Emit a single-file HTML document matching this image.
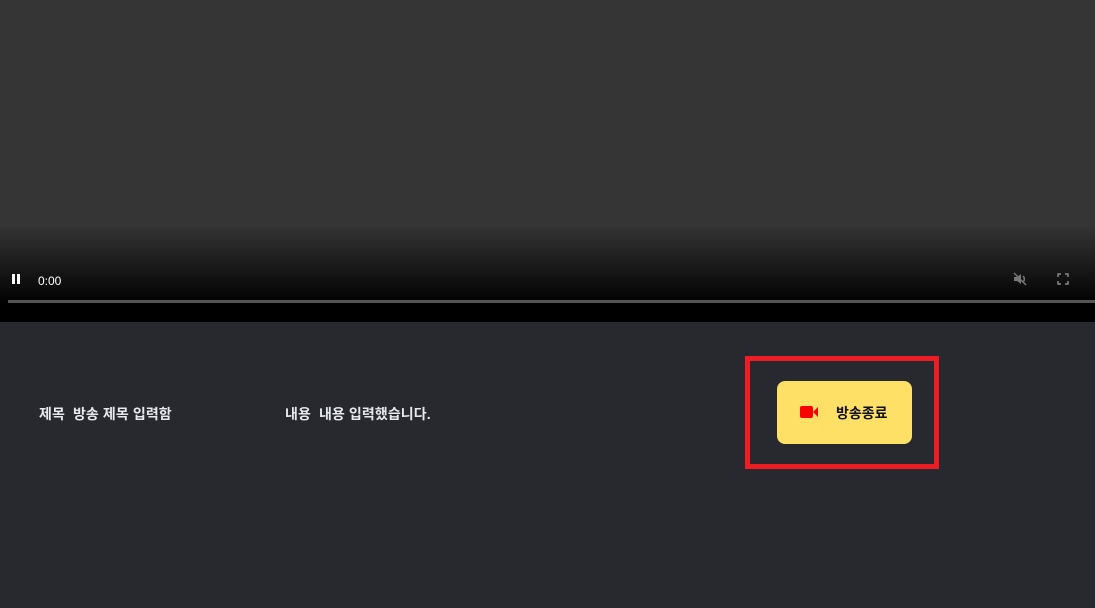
<!DOCTYPE html>
<html><head><meta charset="utf-8"><style>
*{margin:0;padding:0;box-sizing:border-box}
body{width:1095px;height:608px;background:#28292e;position:relative;overflow:hidden;font-family:"Liberation Sans","Noto Sans CJK KR",sans-serif}
#v{position:absolute;left:0;top:0;width:1095px;height:322px;background:linear-gradient(#353535 0,#353535 225px,#0a0a0a 290px,#000 305px,#000 322px)}
.t{position:absolute;color:#e6e9ee;font-size:14px;font-weight:bold;top:404px;white-space:pre;letter-spacing:0.1px}
</style></head><body>
<div id="v">
<div style="position:absolute;left:12px;top:274px;width:3px;height:10px;background:#fff"></div>
<div style="position:absolute;left:17px;top:274px;width:3px;height:10px;background:#fff"></div>
<div style="position:absolute;left:38px;top:274px;color:#fff;font-size:12px">0:00</div>
<svg style="position:absolute;left:1012px;top:271px" width="16" height="16" viewBox="0 0 16 16"><path d="M2 6h3l4-3v10l-4-3H2z" fill="#777"/><path d="M11 5a4 4 0 0 1 0 6M2 2l12 12" stroke="#777" stroke-width="1.5" fill="none"/></svg>
<svg style="position:absolute;left:1057px;top:273px" width="12" height="12" viewBox="0 0 12 12"><path d="M1 4V1h3M8 1h3v3M11 8v3H8M4 11H1V8" stroke="#888" stroke-width="1.5" fill="none"/></svg>
<div style="position:absolute;left:8px;top:300px;width:1087px;height:3px;background:#555"></div>
</div>
<div class="t" style="left:39px">제목  방송 제목 입력함</div>
<div class="t" style="left:285px">내용  내용 입력했습니다.</div>
<div style="position:absolute;left:745px;top:356px;width:194px;height:113px;border:5px solid #ee1c25"></div>
<div style="position:absolute;left:777px;top:381px;width:135px;height:63px;background:#ffe066;border-radius:8px">
<svg style="position:absolute;left:23px;top:24px" width="19" height="14" viewBox="0 0 19 14"><rect x="0" y="1" width="13" height="12" rx="2" fill="#f00"/><path d="M13 7l5-5v10z" fill="#f00"/></svg>
<div style="position:absolute;left:59px;top:22px;font-size:14px;font-weight:bold;color:#111">방송종료</div>
</div>
</body></html>
